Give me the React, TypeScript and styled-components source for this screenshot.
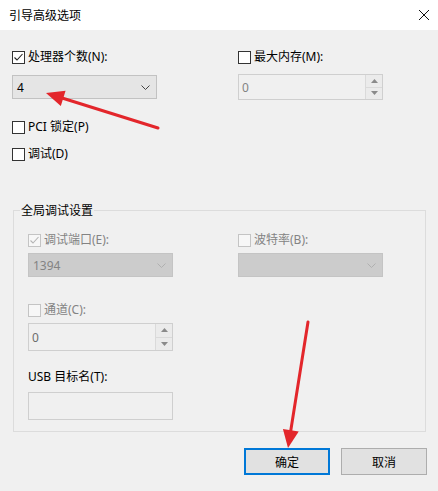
import React from "react";
import styled, { createGlobalStyle, css } from "styled-components";

const GlobalStyle = createGlobalStyle`
  html, body { margin: 0; padding: 0; background: #f0f0f0; }
  body {
    font-family: "Noto Sans", "Noto Sans CJK SC", sans-serif;
    font-size: 12px;
    color: #000;
  }
`;

const DISABLED = "#838383";

const Window = styled.div`
  position: relative;
  width: 438px;
  height: 491px;
  background: #f0f0f0;
  display: flex;
  flex-direction: column;
  overflow: hidden;
`;

const TitleBar = styled.div`
  height: 30px;
  flex: none;
  background: #ffffff;
  display: flex;
  align-items: center;
  justify-content: space-between;
  padding: 0 9px 0 9px;
  box-sizing: border-box;
`;

const Title = styled.span`
  font-size: 12px;
  line-height: 16px;
  font-family: "Noto Sans CJK SC", sans-serif;
`;

const CloseButton = styled.span`
  width: 10px;
  height: 10px;
  display: flex;
  svg { display: block; }
`;

const Body = styled.div`
  flex: 1;
  padding: 18px 11px 0 12px;
  display: flex;
  flex-direction: column;
`;

const TwoCols = styled.div<{ $gap: number }>`
  display: grid;
  grid-template-columns: 145px 145px;
  column-gap: ${(p) => p.$gap}px;
  align-items: start;
`;

const Column = styled.div`
  display: flex;
  flex-direction: column;
`;

const CheckRow = styled.label<{ $mt?: number; $disabled?: boolean }>`
  display: flex;
  align-items: center;
  gap: 3px;
  height: 18px;
  margin-top: ${(p) => p.$mt ?? 0}px;
  font-size: 12px;
  line-height: 18px;
  color: ${(p) => (p.$disabled ? DISABLED : "#000")};
  white-space: nowrap;
`;

const Box = styled.span<{ $disabled?: boolean }>`
  width: 13px;
  height: 13px;
  box-sizing: border-box;
  flex: none;
  border: 1px solid ${(p) => (p.$disabled ? "#c4c4c4" : "#333333")};
  background: ${(p) => (p.$disabled ? "#f7f7f7" : "#ffffff")};
  display: flex;
  align-items: center;
  justify-content: center;
  svg { display: block; }
`;

const Label = styled.div<{ $mt?: number }>`
  height: 18px;
  line-height: 18px;
  margin-top: ${(p) => p.$mt ?? 0}px;
  font-size: 12px;
  white-space: nowrap;
`;

const Combo = styled.div<{ $mt?: number; $disabled?: boolean }>`
  height: 24px;
  margin-top: ${(p) => p.$mt ?? 0}px;
  box-sizing: border-box;
  display: flex;
  align-items: center;
  justify-content: space-between;
  padding: 0 6px 0 4px;
  font-size: 12px;
  ${(p) =>
    p.$disabled
      ? css`
          background: #cccccc;
          border: 1px solid #c4c4c4;
          color: ${DISABLED};
        `
      : css`
          background: #e5e5e5;
          border: 1px solid #c2c2c2;
          color: #000;
        `}
`;

const Spin = styled.div<{ $mt?: number; $h: number }>`
  height: ${(p) => p.$h}px;
  margin-top: ${(p) => p.$mt ?? 0}px;
  box-sizing: border-box;
  border: 1px solid #cfcfcf;
  background: #f0f0f0;
  display: flex;
  align-items: stretch;
`;

const SpinText = styled.span<{ $color?: string }>`
  flex: 1;
  display: flex;
  align-items: center;
  padding-left: 3px;
  color: ${(p) => p.$color ?? DISABLED};
`;

const SpinButtons = styled.div`
  width: 16px;
  flex: none;
  display: flex;
  flex-direction: column;
  border-left: 1px solid #dadada;
`;

const SpinButton = styled.div`
  flex: 1;
  display: flex;
  align-items: center;
  justify-content: center;
  background: #ebebeb;
  & + & { border-top: 1px solid #dadada; }
  svg { display: block; }
`;

const TextBox = styled.div<{ $mt?: number }>`
  height: 28px;
  margin-top: ${(p) => p.$mt ?? 0}px;
  box-sizing: border-box;
  border: 1px solid #cfcfcf;
  background: #f0f0f0;
  width: 145px;
`;

const GroupBox = styled.div`
  margin: 47px 1px 0 1px;
  border: 1px solid #dcdcdc;
  padding: 0 14px 11px 14px;
  display: flex;
  flex-direction: column;
`;

const GroupTitle = styled.div`
  align-self: flex-start;
  margin: -9px 0 0 -8px;
  padding: 0 1px;
  background: #f0f0f0;
  line-height: 16px;
  font-size: 12px;
  font-family: "Noto Sans CJK SC", sans-serif;
`;

const ButtonBar = styled.div`
  display: flex;
  justify-content: flex-end;
  gap: 11px;
  margin-top: 16px;
`;

const Button = styled.button<{ $default?: boolean }>`
  width: 86px;
  height: 27px;
  box-sizing: border-box;
  background: #e1e1e1;
  border: ${(p) => (p.$default ? "2px solid #0078d7" : "1px solid #adadad")};
  font-family: "Noto Sans CJK SC", sans-serif;
  font-size: 12px;
  color: #000;
  padding: 0;
  margin: 0;
`;

const Overlay = styled.svg`
  position: absolute;
  left: 0;
  top: 0;
  pointer-events: none;
`;

const Check = ({ color }: { color: string }) => (
  <svg width="11" height="11" viewBox="0 0 11 11">
    <polyline points="1.5,5.5 4,8 9.5,2" fill="none" stroke={color} strokeWidth="1.1" />
  </svg>
);

const CheckBox = ({ checked, disabled }: { checked?: boolean; disabled?: boolean }) => (
  <Box $disabled={disabled}>{checked && <Check color={disabled ? "#b5b5b5" : "#222"} />}</Box>
);

const Chevron = ({ color }: { color: string }) => (
  <svg width="9" height="5" viewBox="0 0 9 5">
    <polyline points="0.5,0.5 4.5,4.5 8.5,0.5" fill="none" stroke={color} strokeWidth="1" />
  </svg>
);

const Tri = ({ up }: { up?: boolean }) => (
  <svg width="7" height="4" viewBox="0 0 7 4">
    <polygon points={up ? "0,4 3.5,0 7,4" : "0,0 7,0 3.5,4"} fill="#8a8a8a" />
  </svg>
);

const SpinBox = ({ value, h, mt, color }: { value: string; h: number; mt?: number; color?: string }) => (
  <Spin $h={h} $mt={mt}>
    <SpinText $color={color}>{value}</SpinText>
    <SpinButtons>
      <SpinButton>
        <Tri up />
      </SpinButton>
      <SpinButton>
        <Tri />
      </SpinButton>
    </SpinButtons>
  </Spin>
);

const Arrow = ({ x1, y1, x2, y2 }: { x1: number; y1: number; x2: number; y2: number }) => {
  const dx = x2 - x1;
  const dy = y2 - y1;
  const len = Math.hypot(dx, dy);
  const ux = dx / len;
  const uy = dy / len;
  const headLen = 18;
  const half = 8;
  const bx = x2 - ux * headLen;
  const by = y2 - uy * headLen;
  const px = -uy;
  const py = ux;
  const pts = `${x2},${y2} ${bx + px * half},${by + py * half} ${bx - px * half},${by - py * half}`;
  return (
    <g>
      <line x1={x1} y1={y1} x2={bx + ux * 2} y2={by + uy * 2} stroke="#e3262b" strokeWidth="3" strokeLinecap="round" />
      <polygon points={pts} fill="#e3262b" />
    </g>
  );
};

export default function App() {
  return (
    <>
      <GlobalStyle />
      <Window>
        <TitleBar>
          <Title>引导高级选项</Title>
          <CloseButton>
            <svg width="10" height="10" viewBox="0 0 10 10">
              <line x1="0" y1="0" x2="10" y2="10" stroke="#111" strokeWidth="1" />
              <line x1="10" y1="0" x2="0" y2="10" stroke="#111" strokeWidth="1" />
            </svg>
          </CloseButton>
        </TitleBar>
        <Body>
          <TwoCols $gap={81}>
            <Column>
              <CheckRow>
                <CheckBox checked />
                处理器个数(N):
              </CheckRow>
              <Combo $mt={9}>
                <span>4</span>
                <Chevron color="#444" />
              </Combo>
              <CheckRow $mt={19}>
                <CheckBox />
                PCI 锁定(P)
              </CheckRow>
              <CheckRow $mt={9}>
                <CheckBox />
                调试(D)
              </CheckRow>
            </Column>
            <Column>
              <CheckRow>
                <CheckBox />
                最大内存(M):
              </CheckRow>
              <SpinBox value="0" h={26} mt={8} />
            </Column>
          </TwoCols>

          <GroupBox>
            <GroupTitle>全局调试设置</GroupTitle>
            <TwoCols $gap={65}>
              <Column>
                <CheckRow $mt={13} $disabled>
                  <CheckBox checked disabled />
                  调试端口(E):
                </CheckRow>
                <Combo $mt={4} $disabled>
                  <span>1394</span>
                  <Chevron color="#b0b0b0" />
                </Combo>
                <CheckRow $mt={24} $disabled>
                  <CheckBox disabled />
                  通道(C):
                </CheckRow>
                <SpinBox value="0" h={28} mt={4} color="#6d6d6d" />
                <Label $mt={17}>USB 目标名(T):</Label>
                <TextBox $mt={6} />
              </Column>
              <Column>
                <CheckRow $mt={13} $disabled>
                  <CheckBox disabled />
                  波特率(B):
                </CheckRow>
                <Combo $mt={4} $disabled>
                  <span />
                  <Chevron color="#b0b0b0" />
                </Combo>
              </Column>
            </TwoCols>
          </GroupBox>

          <ButtonBar>
            <Button $default>确定</Button>
            <Button>取消</Button>
          </ButtonBar>
        </Body>
        <Overlay width="438" height="491" viewBox="0 0 438 491">
          <Arrow x1={158} y1={128} x2={46} y2={93} />
          <Arrow x1={308} y1={322} x2={288} y2={448} />
        </Overlay>
      </Window>
    </>
  );
}
